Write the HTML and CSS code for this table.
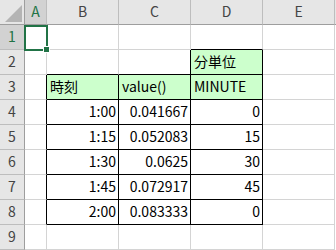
FILE: index.html
```html
<!DOCTYPE html>
<html lang="ja">
<head>
<meta charset="utf-8">
<link rel="stylesheet" href="styles.css">
</head>
<body>
<div class="sheet">
  <div class="c corner"><span class="tri"></span></div>
  <div class="c hd sel">A</div>
  <div class="c hd">B</div>
  <div class="c hd">C</div>
  <div class="c hd">D</div>
  <div class="c hd">E</div>
  <div class="c hd fill"></div>

  <div class="c rh sel">1</div>
  <div class="c active"><span class="cursor"><span class="handle"></span></span></div>
  <div class="c"></div>
  <div class="c"></div>
  <div class="c kb"></div>
  <div class="c"></div>
  <div class="fill"></div>

  <div class="c rh">2</div>
  <div class="c"></div>
  <div class="c kb"></div>
  <div class="c kb kr"></div>
  <div class="c g kr kb">分単位</div>
  <div class="c"></div>
  <div class="fill"></div>

  <div class="c rh">3</div>
  <div class="c kr"></div>
  <div class="c g kr kb">時刻</div>
  <div class="c g kr kb">value()</div>
  <div class="c g kr kb">MINUTE</div>
  <div class="c"></div>
  <div class="fill"></div>

  <div class="c rh">4</div>
  <div class="c kr"></div>
  <div class="c num kr kb">1:00</div>
  <div class="c num kr kb">0.041667</div>
  <div class="c num kr kb">0</div>
  <div class="c"></div>
  <div class="fill"></div>

  <div class="c rh">5</div>
  <div class="c kr"></div>
  <div class="c num kr kb">1:15</div>
  <div class="c num kr kb">0.052083</div>
  <div class="c num kr kb">15</div>
  <div class="c"></div>
  <div class="fill"></div>

  <div class="c rh">6</div>
  <div class="c kr"></div>
  <div class="c num kr kb">1:30</div>
  <div class="c num kr kb">0.0625</div>
  <div class="c num kr kb">30</div>
  <div class="c"></div>
  <div class="fill"></div>

  <div class="c rh">7</div>
  <div class="c kr"></div>
  <div class="c num kr kb">1:45</div>
  <div class="c num kr kb">0.072917</div>
  <div class="c num kr kb">45</div>
  <div class="c"></div>
  <div class="fill"></div>

  <div class="c rh">8</div>
  <div class="c kr"></div>
  <div class="c num kr kb">2:00</div>
  <div class="c num kr kb">0.083333</div>
  <div class="c num kr kb">0</div>
  <div class="c"></div>
  <div class="fill"></div>

  <div class="c rh">9</div>
  <div class="c"></div>
  <div class="c"></div>
  <div class="c"></div>
  <div class="c"></div>
  <div class="c"></div>
  <div class="fill"></div>
</div>
</body>
</html>
```

FILE: styles.css
```css
html, body {
  margin: 0;
  padding: 0;
  background: #ffffff;
  overflow: hidden;
}

.sheet {
  display: grid;
  grid-template-columns: 25px 22px 72px 72px 72px 72px 1fr;
  grid-auto-rows: 25px;
  width: 336px;
  height: 250px;
  font-family: "Noto Sans CJK JP", "Noto Sans", sans-serif;
  font-size: 14px;
  color: #000000;
}

.c {
  box-sizing: border-box;
  border-right: 1px solid #d4d4d4;
  border-bottom: 1px solid #d4d4d4;
  padding: 1px 2px 3px 3px;
  line-height: 20px;
  white-space: nowrap;
  overflow: hidden;
}

.num {
  text-align: right;
}

.g {
  background: #ccffcc;
}

.kr {
  border-right-color: #000000;
}

.kb {
  border-bottom-color: #000000;
}

.hd {
  background: #e6e6e6;
  border-right-color: #bdbdbd;
  border-bottom-color: #9e9e9e;
  text-align: center;
  color: #444444;
  padding: 0;
  line-height: 23px;
}

.hd.fill {
  border-right: none;
}

.rh {
  background: #e6e6e6;
  border-right-color: #9e9e9e;
  border-bottom-color: #bdbdbd;
  text-align: center;
  color: #444444;
  padding: 0;
  line-height: 23px;
}

.sel {
  background: #d2d2d2;
  color: #217346;
}

.corner {
  background: #e6e6e6;
  border-right-color: #9e9e9e;
  border-bottom-color: #9e9e9e;
  padding: 0;
  position: relative;
}

.tri {
  position: absolute;
  right: 2px;
  bottom: 2px;
  width: 0;
  height: 0;
  border-style: solid;
  border-width: 0 0 17px 17px;
  border-color: transparent transparent #b4b4b4 transparent;
}

.active {
  position: relative;
  overflow: visible;
  padding: 0;
}

.cursor {
  position: absolute;
  left: -1px;
  top: 0;
  width: 24px;
  height: 26px;
  box-sizing: border-box;
  border: 2px solid #217346;
  z-index: 2;
}

.handle {
  position: absolute;
  right: -4px;
  bottom: -4px;
  width: 5px;
  height: 5px;
  background: #217346;
  border: 1px solid #ffffff;
  border-top-color: #ffffff;
}
```
